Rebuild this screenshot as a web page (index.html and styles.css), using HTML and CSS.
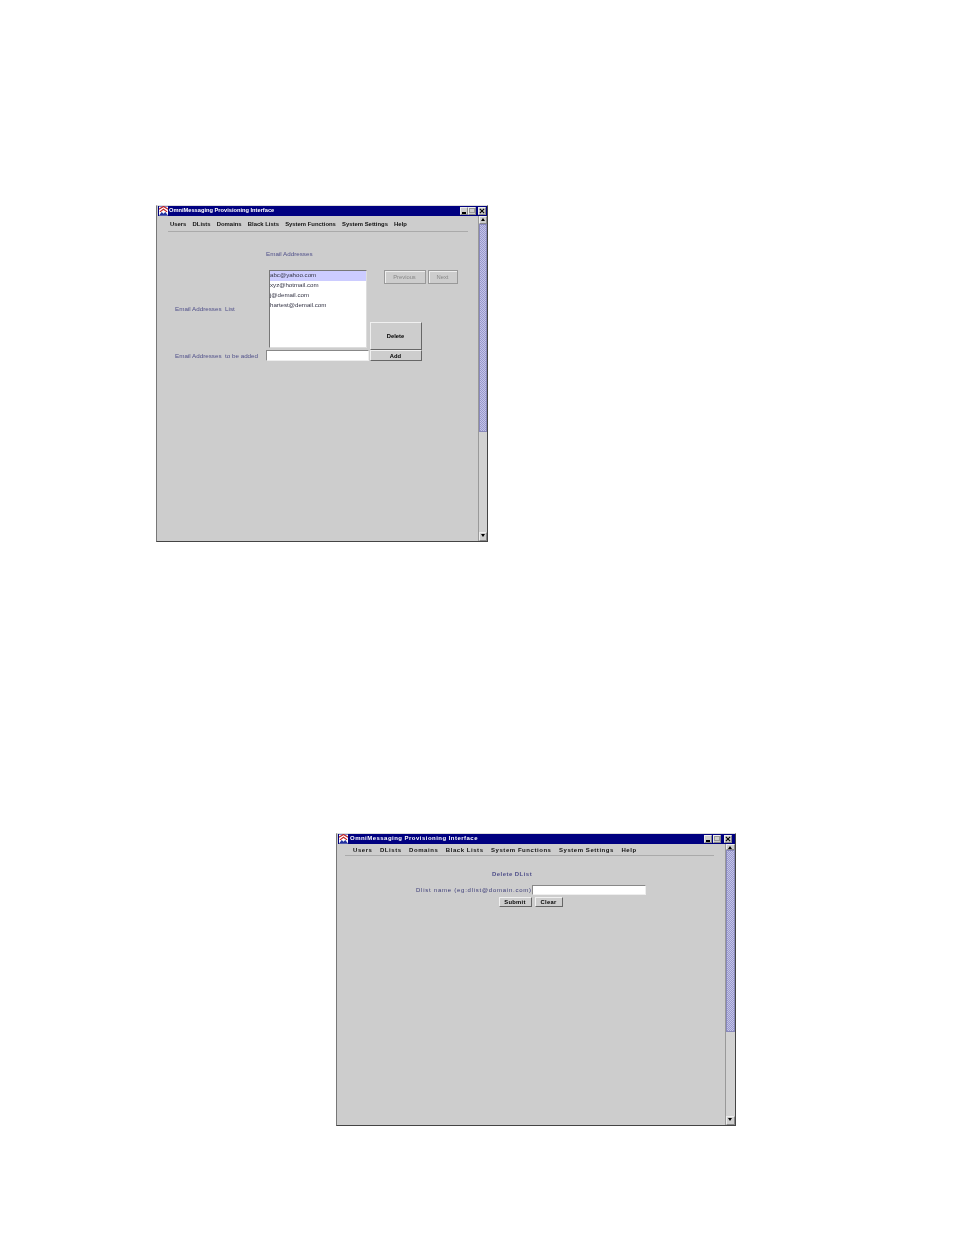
FILE: index.html
```html
<!DOCTYPE html>
<html lang="en">

<head>
  <meta charset="UTF-8" />
  <title>OmniMessaging Provisioning Interface</title>
  <link rel="stylesheet" href="styles.css">
</head>

<body>

  <!-- Email addresses window -->
  <div class="window window-email">
    <div class="titlebar">
      <svg class="app-icon" viewBox="0 0 10 10">
        <rect width="10" height="10" fill="#fff" />
        <path d="M0 3 L5 0 L10 3 M1 6 L5 3 L9 6" fill="none" stroke="#c02020" stroke-width="1.3" />
        <path d="M0 10 L3 6 L5 8 L7 6 L10 10 Z" fill="#2030a0" />
      </svg>
      <span class="title-text">OmniMessaging Provisioning Interface</span>
      <div class="title-buttons">
        <span class="tbtn"><i class="tmin"></i></span>
        <span class="tbtn"><i class="tmax"></i></span>
        <span class="tbtn tclose">
          <svg viewBox="0 0 7 7"><path d="M1 1 L6 6 M6 1 L1 6" stroke="#000" stroke-width="1.3" /></svg>
        </span>
      </div>
    </div>

    <div class="window-body">
      <div class="content">
        <div class="menu">
          <span>Users</span>
          <span>DLists</span>
          <span>Domains</span>
          <span>Black Lists</span>
          <span>System Functions</span>
          <span>System Settings</span>
          <span>Help</span>
        </div>

        <div class="email-form">
          <div class="email-heading">Email Addresses</div>

          <div class="email-label-list">Email Addresses&nbsp; List</div>

          <div class="email-list">
            <div class="email-item selected">abc@yahoo.com</div>
            <div class="email-item">xyz@hotmail.com</div>
            <div class="email-item">j@demail.com</div>
            <div class="email-item">hartest@demail.com</div>
          </div>

          <div class="email-side">
            <div class="pager">
              <button class="btn btn-disabled btn-prev">Previous</button>
              <button class="btn btn-disabled btn-next">Next</button>
            </div>
            <button class="btn btn-delete">Delete</button>
          </div>

          <div class="email-label-add">Email Addresses&nbsp; to be added</div>
          <div class="email-add-row">
            <input class="text-input input-email" type="text" />
            <button class="btn btn-add">Add</button>
          </div>
        </div>
      </div>

      <div class="scrollbar">
        <div class="arrow"><i class="arrow-up"></i></div>
        <div class="thumb thumb-email"></div>
        <div class="track"></div>
        <div class="arrow arrow-end"><i class="arrow-down"></i></div>
      </div>
    </div>
  </div>

  <!-- Delete DList window -->
  <div class="window window-dlist">
    <div class="titlebar">
      <svg class="app-icon" viewBox="0 0 10 10">
        <rect width="10" height="10" fill="#fff" />
        <path d="M0 3 L5 0 L10 3 M1 6 L5 3 L9 6" fill="none" stroke="#c02020" stroke-width="1.3" />
        <path d="M0 10 L3 6 L5 8 L7 6 L10 10 Z" fill="#2030a0" />
      </svg>
      <span class="title-text">OmniMessaging Provisioning Interface</span>
      <div class="title-buttons">
        <span class="tbtn"><i class="tmin"></i></span>
        <span class="tbtn"><i class="tmax"></i></span>
        <span class="tbtn tclose">
          <svg viewBox="0 0 7 7"><path d="M1 1 L6 6 M6 1 L1 6" stroke="#000" stroke-width="1.3" /></svg>
        </span>
      </div>
    </div>

    <div class="window-body">
      <div class="content">
        <div class="menu">
          <span>Users</span>
          <span>DLists</span>
          <span>Domains</span>
          <span>Black Lists</span>
          <span>System Functions</span>
          <span>System Settings</span>
          <span>Help</span>
        </div>

        <div class="dlist-form">
          <div class="dlist-heading">Delete DList</div>
          <div class="dlist-row">
            <label class="dlist-label">Dlist name (eg:dlist@domain.com)</label>
            <input class="text-input input-dlist" type="text" />
          </div>
          <div class="dlist-buttons">
            <button class="btn btn-submit">Submit</button>
            <button class="btn btn-clear">Clear</button>
          </div>
        </div>
      </div>

      <div class="scrollbar">
        <div class="arrow"><i class="arrow-up"></i></div>
        <div class="thumb thumb-dlist"></div>
        <div class="track"></div>
        <div class="arrow arrow-end"><i class="arrow-down"></i></div>
      </div>
    </div>
  </div>

</body>

</html>
```

FILE: styles.css
```css
:root {
  --panel: #cdcdcd;
  --navy: #000080;
  --label: #50508a;
  --thumb: #9999cc;
}

* {
  box-sizing: border-box;
}

body {
  margin: 0;
  padding-top: 205px;
  height: 1235px;
  overflow: hidden;
  background-color: #ffffff;
  font-family: "Liberation Sans", Arial, sans-serif;
  color: #000000;
}

/* Windows */
.window {
  display: flex;
  flex-direction: column;
  background-color: var(--panel);
  border: 1px solid #444444;
  border-top-color: #dddddd;
  border-left-color: #777777;
  filter: blur(0.25px);
}

.window-email {
  width: 332px;
  height: 337px;
  margin-left: 156px;
}

.window-dlist {
  width: 400px;
  height: 293px;
  margin-left: 336px;
  margin-top: 291px;
}

.titlebar {
  display: flex;
  align-items: center;
  height: 10px;
  flex-shrink: 0;
  margin: 0 0 0 1px;
  padding-left: 1px;
  line-height: 8px;
  background-color: var(--navy);
  color: #ffffff;
  font-size: 5.7px;
  font-weight: bold;
}

.window-dlist .titlebar {
  font-size: 6px;
  letter-spacing: 0.47px;
}

.app-icon {
  width: 9px;
  height: 10px;
  margin-right: 1px;
}

.window-dlist .app-icon {
  margin-right: 2px;
}

.title-text {
  flex: 1;
  white-space: nowrap;
  padding-bottom: 2px;
}

.title-buttons {
  display: flex;
  margin-right: 1px;
}

.window-dlist .title-buttons {
  gap: 1px;
  margin-right: 3px;
}

.tbtn {
  display: block;
  position: relative;
  width: 8px;
  height: 8px;
  background-color: var(--panel);
  border: 1px solid #888888;
  border-top-color: #eeeeee;
  border-left-color: #eeeeee;
}

.tclose {
  margin-left: 2px;
}

.tmin {
  position: absolute;
  left: 1px;
  bottom: 0;
  width: 4px;
  height: 2px;
  background-color: #000000;
}

.tmax {
  position: absolute;
  left: 0;
  top: 0;
  width: 6px;
  height: 5px;
  border: 1px solid #999999;
}

.tclose svg {
  display: block;
  width: 6px;
  height: 6px;
}

.window-body {
  flex: 1;
  display: flex;
  min-height: 0;
}

.content {
  flex: 1;
  min-width: 0;
}

/* Menu bar */
.menu {
  display: flex;
  align-items: flex-end;
  font-size: 5.9px;
  font-weight: bold;
  white-space: nowrap;
  border-bottom: 1px solid #aaaaaa;
  color: #111111;
}

.menu span {
  line-height: 8px;
}

.window-email .menu {
  margin: 0 10px 0 11px;
  padding-left: 2px;
  height: 16px;
  gap: 6.2px;
}

.window-email .menu span {
  padding-bottom: 3px;
}

.window-dlist .menu {
  margin: 0 11px 0 8px;
  padding-left: 8px;
  height: 12px;
  gap: 7.5px;
  font-size: 6px;
  letter-spacing: 0.55px;
}

.window-dlist .menu span {
  padding-bottom: 1px;
}

/* Shared buttons and inputs */
.btn {
  display: block;
  padding: 0 1px 0 0;
  font-family: inherit;
  font-size: 5.8px;
  font-weight: bold;
  color: #000000;
  background-color: var(--panel);
  border: 1px solid #666666;
  border-top-color: #f0f0f0;
  border-left-color: #f0f0f0;
}

.btn-disabled {
  height: 14px;
  font-weight: normal;
  color: #888888;
  border: 1px solid #999999;
  box-shadow: inset 1px 1px 0 #eeeeee;
}

.text-input {
  display: block;
  padding: 0;
  background-color: #ffffff;
  border: 1px solid #888888;
  border-bottom-color: #eeeeee;
  border-right-color: #eeeeee;
  outline: none;
}

/* Email form */
.email-form {
  display: grid;
  grid-template-columns: 109px 3px 101px auto;
  grid-template-rows: 38px 78px 2px 12px;
  color: var(--label);
  font-size: 6.25px;
}

.email-heading {
  grid-column: 2 / 5;
  grid-row: 1;
  padding-top: 18px;
  line-height: 8px;
  font-size: 6.25px;
}

.email-label-list {
  grid-column: 1;
  grid-row: 2;
  align-self: center;
  padding: 0 0 0 18px;
  line-height: 8px;
  white-space: nowrap;
}

.email-list {
  grid-column: 3;
  grid-row: 2;
  width: 98px;
  background-color: #ffffff;
  border: 1px solid #777777;
  border-bottom-color: #dddddd;
  border-right-color: #dddddd;
  color: #333344;
}

.email-item {
  height: 10px;
  line-height: 8px;
  font-size: 6.15px;
}

.email-item.selected {
  background-color: #ccccff;
}

.email-side {
  grid-column: 4;
  grid-row: 2 / 4;
  display: flex;
  flex-direction: column;
  justify-content: space-between;
}

.pager {
  display: flex;
  gap: 2px;
  margin-left: 14px;
}

.btn-prev {
  width: 42px;
}

.btn-next {
  width: 30px;
}

.btn-delete {
  width: 52px;
  height: 28px;
}

.email-label-add {
  grid-column: 1;
  grid-row: 4;
  padding-left: 18px;
  line-height: 11px;
  white-space: nowrap;
}

.email-add-row {
  grid-column: 2 / 5;
  grid-row: 4;
  display: flex;
  gap: 1px;
}

.input-email {
  width: 103px;
  height: 11px;
}

.btn-add {
  width: 52px;
  height: 11px;
}

/* Delete DList form */
.dlist-form {
  display: flex;
  flex-direction: column;
  color: var(--label);
  font-size: 6px;
  font-weight: bold;
}

.dlist-heading {
  margin-top: 14px;
  padding-left: 155px;
  line-height: 8px;
  letter-spacing: 0.45px;
}

.dlist-row {
  display: flex;
  align-items: center;
  margin-top: 7px;
  padding-left: 79px;
}

.dlist-label {
  width: 116px;
  white-space: nowrap;
  font-weight: normal;
  letter-spacing: 0.75px;
  color: #3c3c78;
}

.input-dlist {
  width: 114px;
  height: 10px;
}

.dlist-buttons {
  display: flex;
  gap: 3px;
  margin-top: 2px;
  padding-left: 162px;
}

.btn-submit {
  width: 33px;
  height: 10px;
  letter-spacing: 0.3px;
}

.btn-clear {
  width: 28px;
  height: 10px;
  letter-spacing: 0.3px;
}

/* Scrollbars */
.scrollbar {
  display: flex;
  flex-direction: column;
  width: 9px;
  flex-shrink: 0;
  border-left: 1px solid #999999;
}

.window-dlist .scrollbar {
  width: 10px;
}

.arrow {
  position: relative;
  flex-shrink: 0;
  height: 8px;
  background-color: var(--panel);
  border: 1px solid #eeeeee;
  border-right-color: #888888;
  border-bottom-color: #888888;
}

.window-dlist .arrow {
  height: 6px;
}

.arrow-end,
.window-dlist .arrow-end {
  height: 9px;
}

.arrow i {
  position: absolute;
  left: 1px;
  top: 1px;
  width: 0;
  height: 0;
  border-left: 2.5px solid transparent;
  border-right: 2.5px solid transparent;
}

.arrow-up {
  border-bottom: 3px solid #000000;
}

.arrow-down {
  border-top: 3px solid #000000;
}

.thumb {
  flex-shrink: 0;
  background-color: var(--thumb);
  background-image: repeating-conic-gradient(#9999cc 0 25%, #c4c4e8 0 50%);
  background-size: 2px 2px;
  border: 1px solid #8888bb;
}

.thumb-email {
  height: 208px;
}

.thumb-dlist {
  height: 182px;
}

.track {
  flex: 1;
  background-color: #d2d2d2;
}
```
